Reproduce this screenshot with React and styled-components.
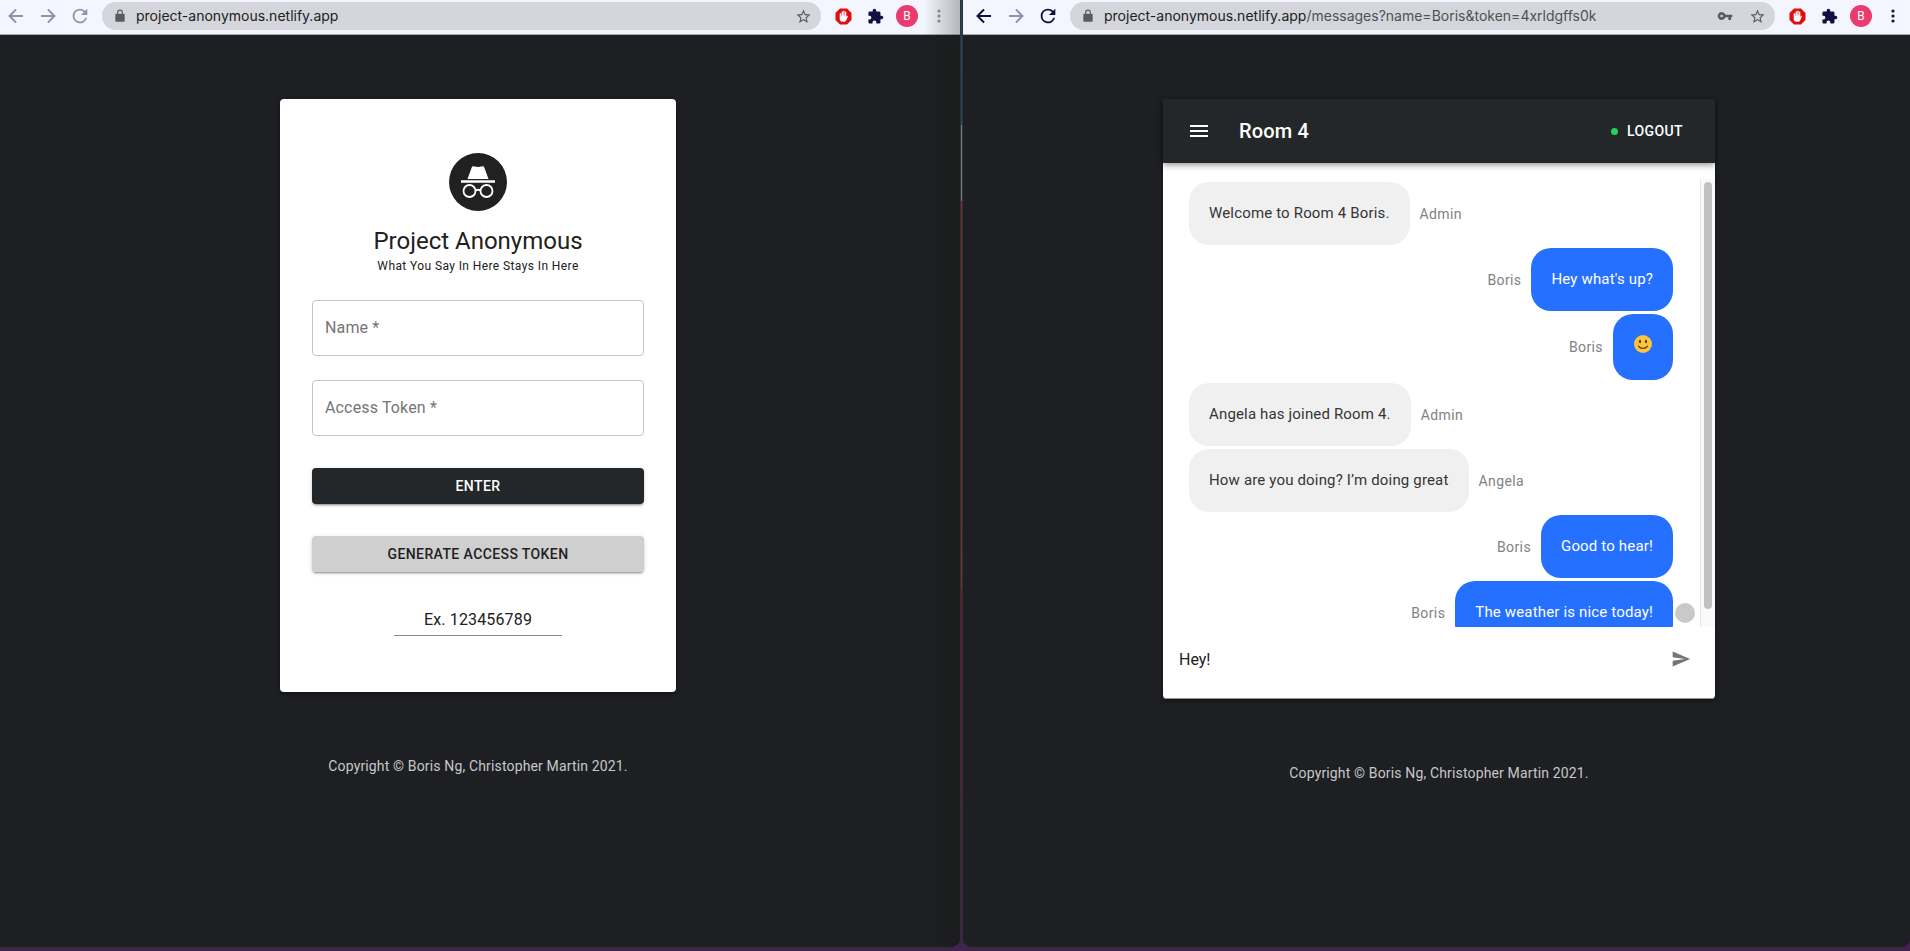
import React from "react";
import styled, { createGlobalStyle, css } from "styled-components";

const GlobalStyle = createGlobalStyle`
  *, *::before, *::after { box-sizing: border-box; }
  body {
    margin: 0;
    background: #43224f;
    font-family: Roboto, "Liberation Sans", sans-serif;
    color: #212121;
  }
  button, input { font-family: inherit; }
  button { border: 0; padding: 0; background: none; cursor: pointer; }
  h1, h2, p { margin: 0; }
`;

const Desktop = styled.div`
  display: grid;
  grid-template-columns: 960fr 3px 947fr;
  min-height: 100vh;
  padding-bottom: 3px;
`;

const Seam = styled.div`
  border-left: 1px solid #2e3134;
  border-right: 1px solid #2e3134;
  background: linear-gradient(
    to bottom,
    #1c4f66 0,
    #1c4a5e 125px,
    #77797c 125px,
    #77797c 201px,
    #7a2a2c 201px,
    #75332f 588px,
    #7d1226 588px,
    #43224f 100%
  );
`;

const Window = styled.section`
  display: flex;
  flex-direction: column;
  min-width: 0;
  overflow: hidden;
  background: #1e1f23;
  border-bottom: 1px solid #303236;
  border-radius: ${(p) => (p.$inactive ? "0 0 9px 0" : "0 0 9px 9px")};
  position: relative;
  ${(p) =>
    p.$inactive &&
    css`
      &::after {
        content: "";
        position: absolute;
        inset: 0 0 0 auto;
        width: 36px;
        background: linear-gradient(to right, transparent, rgba(20, 20, 10, 0.28));
        pointer-events: none;
      }
    `}
`;

const Toolbar = styled.header`
  display: flex;
  align-items: center;
  height: 35px;
  padding: ${(p) => (p.$inactive ? "0 5px 2px 0" : "0 1px 2px 5px")};
  background: #f3f6fe;
  border-bottom: 1px solid #a9abb2;
`;

const ToolButton = styled.button`
  display: grid;
  place-items: center;
  flex: none;
  width: 32px;
  height: 28px;
  color: ${(p) => (p.$dim ? "#9292ae" : "#140f40")};
`;

const AddressBar = styled.div`
  display: flex;
  align-items: center;
  flex: 1;
  min-width: 0;
  height: 28px;
  margin: 0 6px;
  padding: 0 2px 0 11px;
  border-radius: 14px;
  background: #d5d6db;
  color: #5a5c60;
`;

const FieldIcon = styled.span`
  display: grid;
  place-items: center;
  flex: none;
  width: 32px;
  height: 28px;
`;

const Url = styled.span`
  flex: 1;
  margin-left: 9px;
  font-size: 14px;
  line-height: 20px;
  font-family: Inter, Roboto, sans-serif;
  color: #505155;
  white-space: nowrap;
  overflow: hidden;
`;

const Host = styled.span`
  color: #202124;
`;

const Avatar = styled.span`
  display: grid;
  place-items: center;
  width: 22px;
  height: 22px;
  border-radius: 50%;
  background: #ec3a70;
  color: #fff;
  font-size: 12px;
  line-height: 22px;
`;

const Page = styled.main`
  display: flex;
  flex-direction: column;
  align-items: center;
  flex: 1;
  padding: ${(p) => (p.$inactive ? "64px 4px 0 0" : "64px 0 0 5px")};
`;

const paper = css`
  max-width: 100%;
  background: #fff;
  border-radius: 4px;
  box-shadow: 0 2px 4px rgba(0, 0, 0, 0.4);
`;

const LoginCard = styled.form`
  ${paper}
  display: flex;
  flex-direction: column;
  align-items: center;
  width: 396px;
  padding: 54px 32px 56px;
`;

const Title = styled.h1`
  margin-top: 14px;
  font-size: 24px;
  line-height: 32px;
  font-weight: 400;
`;

const Tagline = styled.p`
  font-size: 12px;
  line-height: 19px;
  letter-spacing: 0.03333em;
`;

const TextField = styled.input`
  width: 100%;
  height: 56px;
  margin-top: 24px;
  padding: 0 12px 2px;
  border: 1px solid #c4c4c4;
  border-radius: 4px;
  background: #fff;
  font-size: 16px;
  letter-spacing: 0.00938em;
  &::placeholder { color: #757575; opacity: 1; }
`;

const Button = styled.button`
  width: 100%;
  height: 36px;
  margin-top: 32px;
  border-radius: 4px;
  font-size: 14px;
  line-height: 24px;
  font-weight: 500;
  letter-spacing: 0.02857em;
  text-transform: uppercase;
  color: ${(p) => (p.$dark ? "#fff" : "#212121")};
  background: ${(p) => (p.$dark ? "#242729" : "#cfcfcf")};
  box-shadow: 0 3px 1px -2px rgba(0, 0, 0, 0.2), 0 2px 2px rgba(0, 0, 0, 0.14),
    0 1px 5px rgba(0, 0, 0, 0.12);
`;

const TokenField = styled.input`
  width: 168px;
  height: 32px;
  margin-top: 32px;
  padding: 0;
  border: 0;
  border-bottom: 1px solid #8a8a8a;
  background: transparent;
  font-size: 16px;
  text-align: center;
  letter-spacing: 0.00938em;
  color: #212121;
`;

const FieldStack = styled.div`
  width: 100%;
`;

const Copyright = styled.footer`
  margin-top: 64px;
  font-size: 14px;
  line-height: 20px;
  letter-spacing: 0.01071em;
  color: #c7c7c8;
`;

const ChatCard = styled.section`
  ${paper}
  display: flex;
  flex-direction: column;
  width: 552px;
`;

const ChatHeader = styled.header`
  display: flex;
  align-items: center;
  height: 64px;
  padding: 0 24px 0 12px;
  background: #242729;
  color: #fff;
  box-shadow: 0 2px 4px -1px rgba(0, 0, 0, 0.2), 0 4px 5px rgba(0, 0, 0, 0.14),
    0 1px 10px rgba(0, 0, 0, 0.12);
`;

const MenuButton = styled.button`
  display: grid;
  place-items: center;
  width: 48px;
  height: 48px;
  margin-right: 16px;
  color: inherit;
`;

const RoomName = styled.h2`
  flex: 1;
  font-size: 20px;
  line-height: 32px;
  font-weight: 500;
  letter-spacing: 0.0075em;
`;

const LogoutButton = styled.button`
  display: flex;
  align-items: center;
  gap: 9px;
  padding: 6px 8px;
  color: inherit;
  font-size: 14px;
  line-height: 24px;
  font-weight: 500;
  letter-spacing: 0.02857em;
  text-transform: uppercase;
`;

const OnlineDot = styled.span`
  width: 7px;
  height: 7px;
  border-radius: 50%;
  background: #25d05b;
`;

const Conversation = styled.div`
  display: flex;
  height: 448px;
  margin-top: 16px;
  overflow: hidden;
`;

const MessageList = styled.ul`
  display: flex;
  flex-direction: column;
  flex: 1;
  gap: 3px;
  margin: 0;
  padding: 3px 27px 3px 26px;
  list-style: none;
`;

const Message = styled.li`
  display: flex;
  align-items: center;
  gap: 10px;
  position: relative;
  flex-direction: ${(p) => (p.$own ? "row-reverse" : "row")};
`;

const Bubble = styled.p`
  padding: 20px;
  border-radius: 20px;
  font-size: 15px;
  line-height: 23px;
  letter-spacing: 0.01071em;
  color: ${(p) => (p.$own ? "#fff" : "#353535")};
  background: ${(p) => (p.$own ? "#2670ff" : "#f0f0f0")};
`;

const Smiley = styled.svg`
  display: block;
  width: 20px;
  height: 20px;
  margin-bottom: 6px;
`;

const Sender = styled.span`
  font-size: 14px;
  line-height: 20px;
  letter-spacing: 0.02857em;
  color: #828282;
`;

const Marker = styled.span`
  position: absolute;
  right: -22px;
  width: 20px;
  height: 20px;
  border-radius: 50%;
  background: #c9c9c9;
`;

const ScrollTrack = styled.div`
  width: 15px;
  padding: 3px 3px 18px;
  border-left: 1px solid #e8e8e8;
  background: #fafafa;
`;

const ScrollThumb = styled.div`
  width: 8px;
  height: 100%;
  border-radius: 4px;
  background: #c1c1c1;
`;

const Composer = styled.form`
  display: flex;
  align-items: flex-start;
  height: 72px;
  padding: 8px 10px 0 16px;
  border-bottom: 1px solid #949494;
  border-radius: 0 0 4px 4px;
`;

const ComposerInput = styled.input`
  flex: 1;
  height: 48px;
  padding: 0;
  border: 0;
  outline: 0;
  background: transparent;
  font-size: 16px;
  color: #212121;
`;

const SendButton = styled.button`
  display: grid;
  place-items: center;
  width: 48px;
  height: 48px;
  color: #757575;
`;

const ArrowIcon = ({ forward }) => (
  <svg width="16" height="16" viewBox="0 0 16 16" fill="none" stroke="currentColor" strokeWidth="2" aria-hidden="true">
    {forward ? <path d="M1 8h13M8 1.5 14.5 8 8 14.5" /> : <path d="M15 8H2M8 1.5 1.5 8 8 14.5" />}
  </svg>
);

const ReloadIcon = () => (
  <svg width="22" height="22" viewBox="0 0 24 24" fill="currentColor" aria-hidden="true">
    <path d="M17.65 6.35A7.96 7.96 0 0 0 12 4a8 8 0 1 0 7.73 10h-2.08A6 6 0 1 1 12 6c1.66 0 3.14.69 4.22 1.78L13 11h7V4z" />
  </svg>
);

const LockIcon = () => (
  <svg width="14" height="14" viewBox="0 0 24 24" fill="currentColor" aria-hidden="true">
    <path d="M18 8h-1V6A5 5 0 0 0 7 6v2H6a2 2 0 0 0-2 2v10c0 1.1.9 2 2 2h12a2 2 0 0 0 2-2V10a2 2 0 0 0-2-2zM9 6a3 3 0 0 1 6 0v2H9z" />
  </svg>
);

const StarIcon = () => (
  <svg width="17" height="17" viewBox="0 0 24 24" fill="currentColor" aria-hidden="true">
    <path d="m22 9.24-7.19-.62L12 2 9.19 8.63 2 9.24l5.46 4.73L5.82 21 12 17.27 18.18 21l-1.63-7.03zM12 15.4l-3.76 2.27 1-4.28-3.32-2.88 4.38-.38L12 6.1l1.71 4.04 4.38.38-3.32 2.88 1 4.28z" />
  </svg>
);

const KeyIcon = () => (
  <svg width="16" height="16" viewBox="0 0 24 24" fill="currentColor" aria-hidden="true">
    <path d="M12.65 10A6 6 0 1 0 12.65 14H17v4h4v-4h2v-4zM7 14a2 2 0 1 1 0-4 2 2 0 0 1 0 4z" />
  </svg>
);

const BlockerIcon = () => (
  <svg width="17" height="17" viewBox="0 0 17 17" aria-hidden="true">
    <path fill="#e40d0d" d="M5 .5h7L16.5 5v7L12 16.5H5L.5 12V5z" />
    <path
      fill="#fff"
      d="M5.4 5.2c.6 0 .8.3.8.8V8h.4V4c0-1 1.3-1 1.3 0v3.5h.4V3.3c0-1 1.3-1 1.3 0v4.200h.4V4.3c0-1 1.3-1 1.3 0V9l.7-.9c.5-.5 1.2-.1.9.5l-1.7 3.7c-.5 1-1.2 1.5-2.4 1.5H7.600c-1.8 0-2.9-1-2.9-2.8V6c0-.5.2-.8.7-.8z"
    />
  </svg>
);

const PuzzleIcon = () => (
  <svg width="17" height="17" viewBox="0 0 24 24" fill="currentColor" aria-hidden="true">
    <path d="M20.5 11H19V7a2 2 0 0 0-2-2h-4V3.5a2.500 2.500 0 0 0-5 0V5H4a2 2 0 0 0-2 2v3.8h1.5a2.700 2.700 0 0 1 0 5.400H2V20c0 1.1.9 2 2 2h3.8v-1.5a2.700 2.700 0 0 1 5.4 0V22H17a2 2 0 0 0 2-2v-4h1.5a2.500 2.500 0 0 0 0-5z" />
  </svg>
);

const DotsIcon = () => (
  <svg width="4" height="14" viewBox="0 0 4 14" fill="currentColor" aria-hidden="true">
    <circle cx="2" cy="2" r="1.6" />
    <circle cx="2" cy="7" r="1.6" />
    <circle cx="2" cy="12" r="1.6" />
  </svg>
);

const IncognitoLogo = () => (
  <svg width="58" height="58" viewBox="0 0 58 58" role="img" aria-label="Project Anonymous">
    <circle cx="29" cy="29" r="29" fill="#212121" />
    <path fill="#fff" d="M18.500 26 22.700 14.400c.4-1 1.200-1.300 2.100-1.100 2.700.9 5.700.9 8.400 0 .9-.2 1.700.1 2.100 1.100L39.500 26z" />
    <path fill="#fff" d="M12 27.200h34v2.600H12z" />
    <g fill="none" stroke="#fff" strokeWidth="1.8">
      <circle cx="20.500" cy="38" r="6" />
      <circle cx="37.500" cy="38" r="6" />
      <path d="M26.500 37.500c1.600-1 3.400-1 5 0" />
    </g>
  </svg>
);

const MenuIcon = () => (
  <svg width="24" height="24" viewBox="0 0 24 24" fill="currentColor" aria-hidden="true">
    <path d="M3 18h18v-2H3zm0-5h18v-2H3zm0-7v2h18V6z" />
  </svg>
);

const SendIcon = () => (
  <svg width="20" height="20" viewBox="0 0 24 24" fill="currentColor" aria-hidden="true">
    <path d="M2.01 21 23 12 2.01 3 2 10l15 2-15 2z" />
  </svg>
);

const SmileyFace = () => (
  <Smiley viewBox="0 0 20 20" role="img" aria-label="Smiling face">
    <circle cx="10" cy="10" r="9" fill="#fdc43f" />
    <ellipse cx="7" cy="7.5" rx="1.1" ry="1.7" fill="#5b3a0c" />
    <ellipse cx="13" cy="7.5" rx="1.1" ry="1.7" fill="#5b3a0c" />
    <path d="M5.5 12.2c2 3 7 3 9 0" fill="none" stroke="#5b3a0c" strokeWidth="1.3" strokeLinecap="round" />
  </Smiley>
);

function BrowserWindow({ inactive, path, withKey, children }) {
  return (
    <Window $inactive={inactive}>
      <Toolbar $inactive={inactive}>
        <ToolButton $dim={inactive} aria-label="Back"><ArrowIcon /></ToolButton>
        <ToolButton $dim aria-label="Forward"><ArrowIcon forward /></ToolButton>
        <ToolButton $dim={inactive} aria-label="Reload"><ReloadIcon /></ToolButton>
        <AddressBar>
          <LockIcon />
          <Url><Host>project-anonymous.netlify.app</Host>{path}</Url>
          {withKey && <FieldIcon><KeyIcon /></FieldIcon>}
          <FieldIcon><StarIcon /></FieldIcon>
        </AddressBar>
        <ToolButton aria-label="Content blocker"><BlockerIcon /></ToolButton>
        <ToolButton aria-label="Extensions"><PuzzleIcon /></ToolButton>
        <ToolButton aria-label="Profile"><Avatar>B</Avatar></ToolButton>
        <ToolButton $dim={inactive} aria-label="More"><DotsIcon /></ToolButton>
      </Toolbar>
      <Page $inactive={inactive}>
        {children}
        <Copyright>Copyright © Boris Ng, Christopher Martin 2021.</Copyright>
      </Page>
    </Window>
  );
}

const messages = [
  { from: "Admin", text: "Welcome to Room 4 Boris." },
  { from: "Boris", text: "Hey what's up?", own: true },
  { from: "Boris", text: <SmileyFace />, own: true },
  { from: "Admin", text: "Angela has joined Room 4." },
  { from: "Angela", text: "How are you doing? I’m doing great" },
  { from: "Boris", text: "Good to hear!", own: true },
  { from: "Boris", text: "The weather is nice today!", own: true, latest: true },
];

export default function App() {
  return (
    <>
      <GlobalStyle />
      <Desktop>
        <BrowserWindow inactive>
          <LoginCard onSubmit={(e) => e.preventDefault()}>
            <IncognitoLogo />
            <Title>Project Anonymous</Title>
            <Tagline>What You Say In Here Stays In Here</Tagline>
            <FieldStack>
              <TextField aria-label="Name" placeholder="Name *" />
              <TextField aria-label="Access Token" placeholder="Access Token *" />
            </FieldStack>
            <Button $dark type="submit">Enter</Button>
            <Button type="button">Generate Access Token</Button>
            <TokenField aria-label="Generated token" defaultValue="Ex. 123456789" />
          </LoginCard>
        </BrowserWindow>
        <Seam />
        <BrowserWindow path="/messages?name=Boris&token=4xrldgffs0k" withKey>
          <ChatCard>
            <ChatHeader>
              <MenuButton aria-label="Menu"><MenuIcon /></MenuButton>
              <RoomName>Room 4</RoomName>
              <LogoutButton><OnlineDot />Logout</LogoutButton>
            </ChatHeader>
            <Conversation>
              <MessageList>
                {messages.map((m, i) => (
                  <Message key={i} $own={m.own}>
                    <Bubble as={typeof m.text === "string" ? "p" : "div"} $own={m.own}>{m.text}</Bubble>
                    <Sender>{m.from}</Sender>
                    {m.latest && <Marker />}
                  </Message>
                ))}
              </MessageList>
              <ScrollTrack><ScrollThumb /></ScrollTrack>
            </Conversation>
            <Composer onSubmit={(e) => e.preventDefault()}>
              <ComposerInput aria-label="Message" defaultValue="Hey!" />
              <SendButton aria-label="Send"><SendIcon /></SendButton>
            </Composer>
          </ChatCard>
        </BrowserWindow>
      </Desktop>
    </>
  );
}
